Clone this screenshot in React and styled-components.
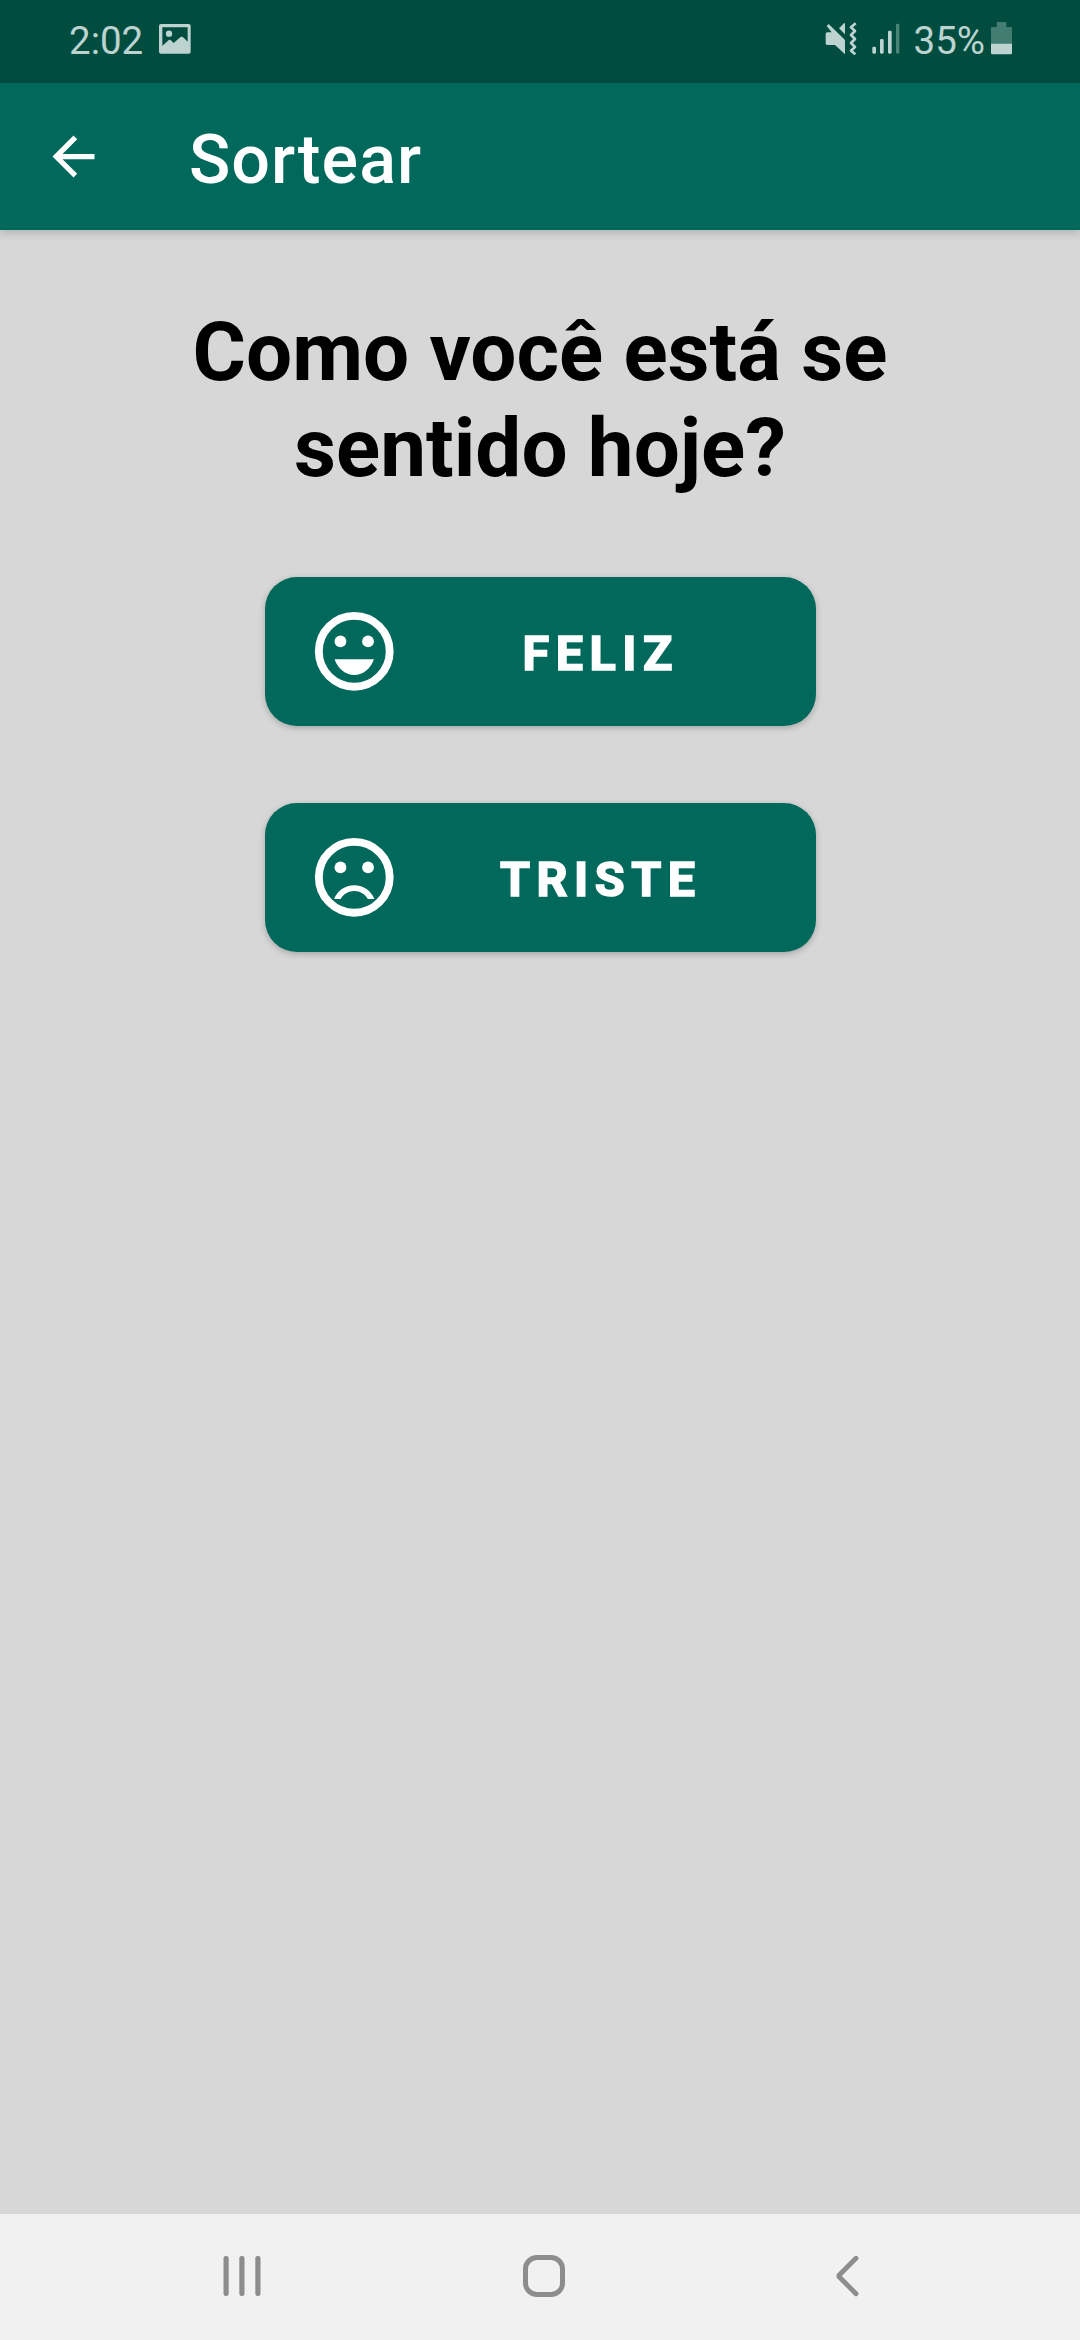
import React from "react";
import styled, { createGlobalStyle } from "styled-components";

const GlobalStyle = createGlobalStyle`
  * {
    box-sizing: border-box;
  }
  body {
    margin: 0;
    background: #d7d7d7;
    font-family: Roboto, sans-serif;
  }
  svg {
    display: block;
    flex-shrink: 0;
  }
`;

const ImageIcon = () => (
  <svg width="32" height="30" viewBox="360 72 96 90" fill="#bcd3cf">
    <path
      fillRule="evenodd"
      d="M366 72h83q6 0 6 6v77q0 6-6 6h-83q-6 0-6-6V78q0-6 6-6zM370 82v54q0 2 2 0l15-14q5-5 10 0l7 7 18-16q6-6 12 0l12 12V82z"
    />
    <circle cx="390" cy="101" r="9.5" />
  </svg>
);

const MuteIcon = () => (
  <svg width="34" height="34" viewBox="72 65 102 102" fill="#bcd3cf">
    <path d="M86 71l49 48v43l-30-28H82q-5 0-5-5v-28q0-5 5-5h13L80 77zM117 84l15-15q3-2 3 1v32z" />
    <path
      d="M167 69l-14 12 12 11-12 12 12 12-12 12 12 12-12 11 13 11"
      fill="none"
      stroke="#bcd3cf"
      strokeWidth="8"
      strokeLinejoin="round"
    />
  </svg>
);

const SignalIcon = () => (
  <svg width="28" height="31" viewBox="215 71 84 93" fill="#bcd3cf">
    <rect x="216" y="142" width="11" height="21" rx="4" />
    <rect x="239" y="119" width="11" height="44" rx="4" />
    <rect x="263" y="94" width="11" height="69" rx="4" />
    <rect x="287" y="73" width="10" height="90" rx="4" fill="#4a8378" />
  </svg>
);

const BatteryIcon = () => (
  <svg width="21" height="33" viewBox="573 66 63 99">
    <path
      d="M590 81V69q0-3 3-3h23q3 0 3 3v12h14q3 0 3 3v48h-63V84q0-3 3-3z"
      fill="#437c71"
    />
    <path d="M573 131h63v28q0 4-4 4h-55q-4 0-4-4z" fill="#bcd3cf" />
  </svg>
);

const BackArrow = () => (
  <svg width="63" height="63" viewBox="0 0 24 24" fill="#fff">
    <path d="M20 11H7.83l5.59-5.59L12 4l-8 8 8 8 1.41-1.41L7.83 13H20v-2z" />
  </svg>
);

const Face = ({ mouth }) => (
  <svg width="94.5" height="94.5" viewBox="0 0 24 24" fill="#fff">
    <circle cx="12" cy="12" r="9" fill="none" stroke="#fff" strokeWidth="2" />
    <circle cx="8.5" cy="9.5" r="1.5" />
    <circle cx="15.5" cy="9.5" r="1.5" />
    <path d={mouth} />
  </svg>
);

const moods = [
  {
    id: 1,
    text: "FELIZ",
    mouth: "M12 18c2.28 0 4.22-1.66 5-4H7c.78 2.34 2.72 4 5 4z",
  },
  {
    id: 2,
    text: "TRISTE",
    mouth:
      "M12 14c-2.33 0-4.32 1.45-5.12 3.5h1.67c.69-1.19 1.97-2 3.45-2s2.75.81 3.45 2h1.67c-.8-2.05-2.79-3.5-5.12-3.5z",
  },
];

const App = () => {
  return (
    <Screen>
      <GlobalStyle />
      <StatusBar>
        <StatusGroup gap={16}>
          <StatusText>2:02</StatusText>
          <ImageIcon />
        </StatusGroup>
        <StatusGroup gap={14}>
          <MuteIcon />
          <SignalIcon />
          <StatusGroup gap={6}>
            <StatusText>35%</StatusText>
            <BatteryIcon />
          </StatusGroup>
        </StatusGroup>
      </StatusBar>
      <AppBar>
        <BackArrow />
        <Title>Sortear</Title>
      </AppBar>
      <Content>
        <Question>
          Como você está se
          <br />
          sentido hoje?
        </Question>
        <MoodList>
          {moods.map(({ id, text, mouth }) => (
            <MoodButton key={id}>
              <Face mouth={mouth} />
              <MoodLabel>{text}</MoodLabel>
            </MoodButton>
          ))}
        </MoodList>
      </Content>
      <NavBar>
        {/* recents */}
        <svg width="38" height="42" viewBox="69 195 114 126" fill="#8d8d8d">
          <rect x="70.5" y="198" width="15.5" height="120" rx="7" />
          <rect x="118" y="198" width="15.5" height="120" rx="7" />
          <rect x="166" y="198" width="15.5" height="120" rx="7" />
        </svg>
        {/* home */}
        <svg width="42" height="42" viewBox="0 0 42 42">
          <rect
            x="2.5"
            y="2.5"
            width="37"
            height="37"
            rx="11.5"
            fill="none"
            stroke="#8d8d8d"
            strokeWidth="5"
          />
        </svg>
        {/* back */}
        <svg width="24" height="42" viewBox="1004 195 72 126">
          <path
            d="M1067 205l-53 53 53 53"
            fill="none"
            stroke="#8d8d8d"
            strokeWidth="14.5"
            strokeLinecap="round"
            strokeLinejoin="bevel"
          />
        </svg>
      </NavBar>
    </Screen>
  );
};

const Screen = styled.div`
  display: flex;
  flex-direction: column;
  width: 1080px;
  height: 2340px;
  background: #d7d7d7;
`;

const StatusBar = styled.div`
  display: flex;
  justify-content: space-between;
  height: 83px;
  padding: 0 68px 6px 69px;
  background: #004d40;
`;

const StatusGroup = styled.div`
  display: flex;
  align-items: center;
  gap: ${({ gap }) => gap}px;
`;

const StatusText = styled.span`
  padding-top: 5px;
  font-size: 38.5px;
  line-height: 46px;
  color: #bcd3cf;
`;

const AppBar = styled.header`
  display: flex;
  align-items: center;
  height: 147px;
  padding: 0 42px;
  background: #00695c;
  box-shadow: 0 2px 10px rgba(0, 0, 0, 0.2);
`;

const Title = styled.h1`
  margin: 6px 0 0 84px;
  font-size: 68.25px;
  font-weight: 500;
  line-height: 80px;
  letter-spacing: 1px;
  color: #fff;
`;

const Content = styled.main`
  display: flex;
  flex: 1;
  flex-direction: column;
  align-items: center;
`;

const Question = styled.h2`
  margin: 74px 0 0;
  font-size: 81.75px;
  font-weight: 700;
  line-height: 96px;
  text-align: center;
  color: #000;
`;

const MoodList = styled.div`
  display: flex;
  flex-direction: column;
  gap: 77px;
  margin-top: 81px;
`;

const MoodButton = styled.button`
  display: flex;
  align-items: center;
  width: 551px;
  height: 149px;
  padding: 0 15px 0 42px;
  border: none;
  border-radius: 32px;
  background: #00695c;
  box-shadow: 0 2px 6px rgba(0, 0, 0, 0.24);
  font-family: inherit;
`;

const MoodLabel = styled.span`
  flex: 1;
  padding-top: 5px;
  font-size: 48.5px;
  font-weight: 700;
  line-height: 60px;
  letter-spacing: 6.5px;
  text-align: center;
  color: #fff;
  -webkit-text-stroke: 1.6px #fff;
`;

const NavBar = styled.nav`
  display: grid;
  grid-template-columns: 300px 312px 24px;
  height: 126px;
  padding: 41px 0 0 223px;
  background: #f1f1f1;
`;

export default App;
